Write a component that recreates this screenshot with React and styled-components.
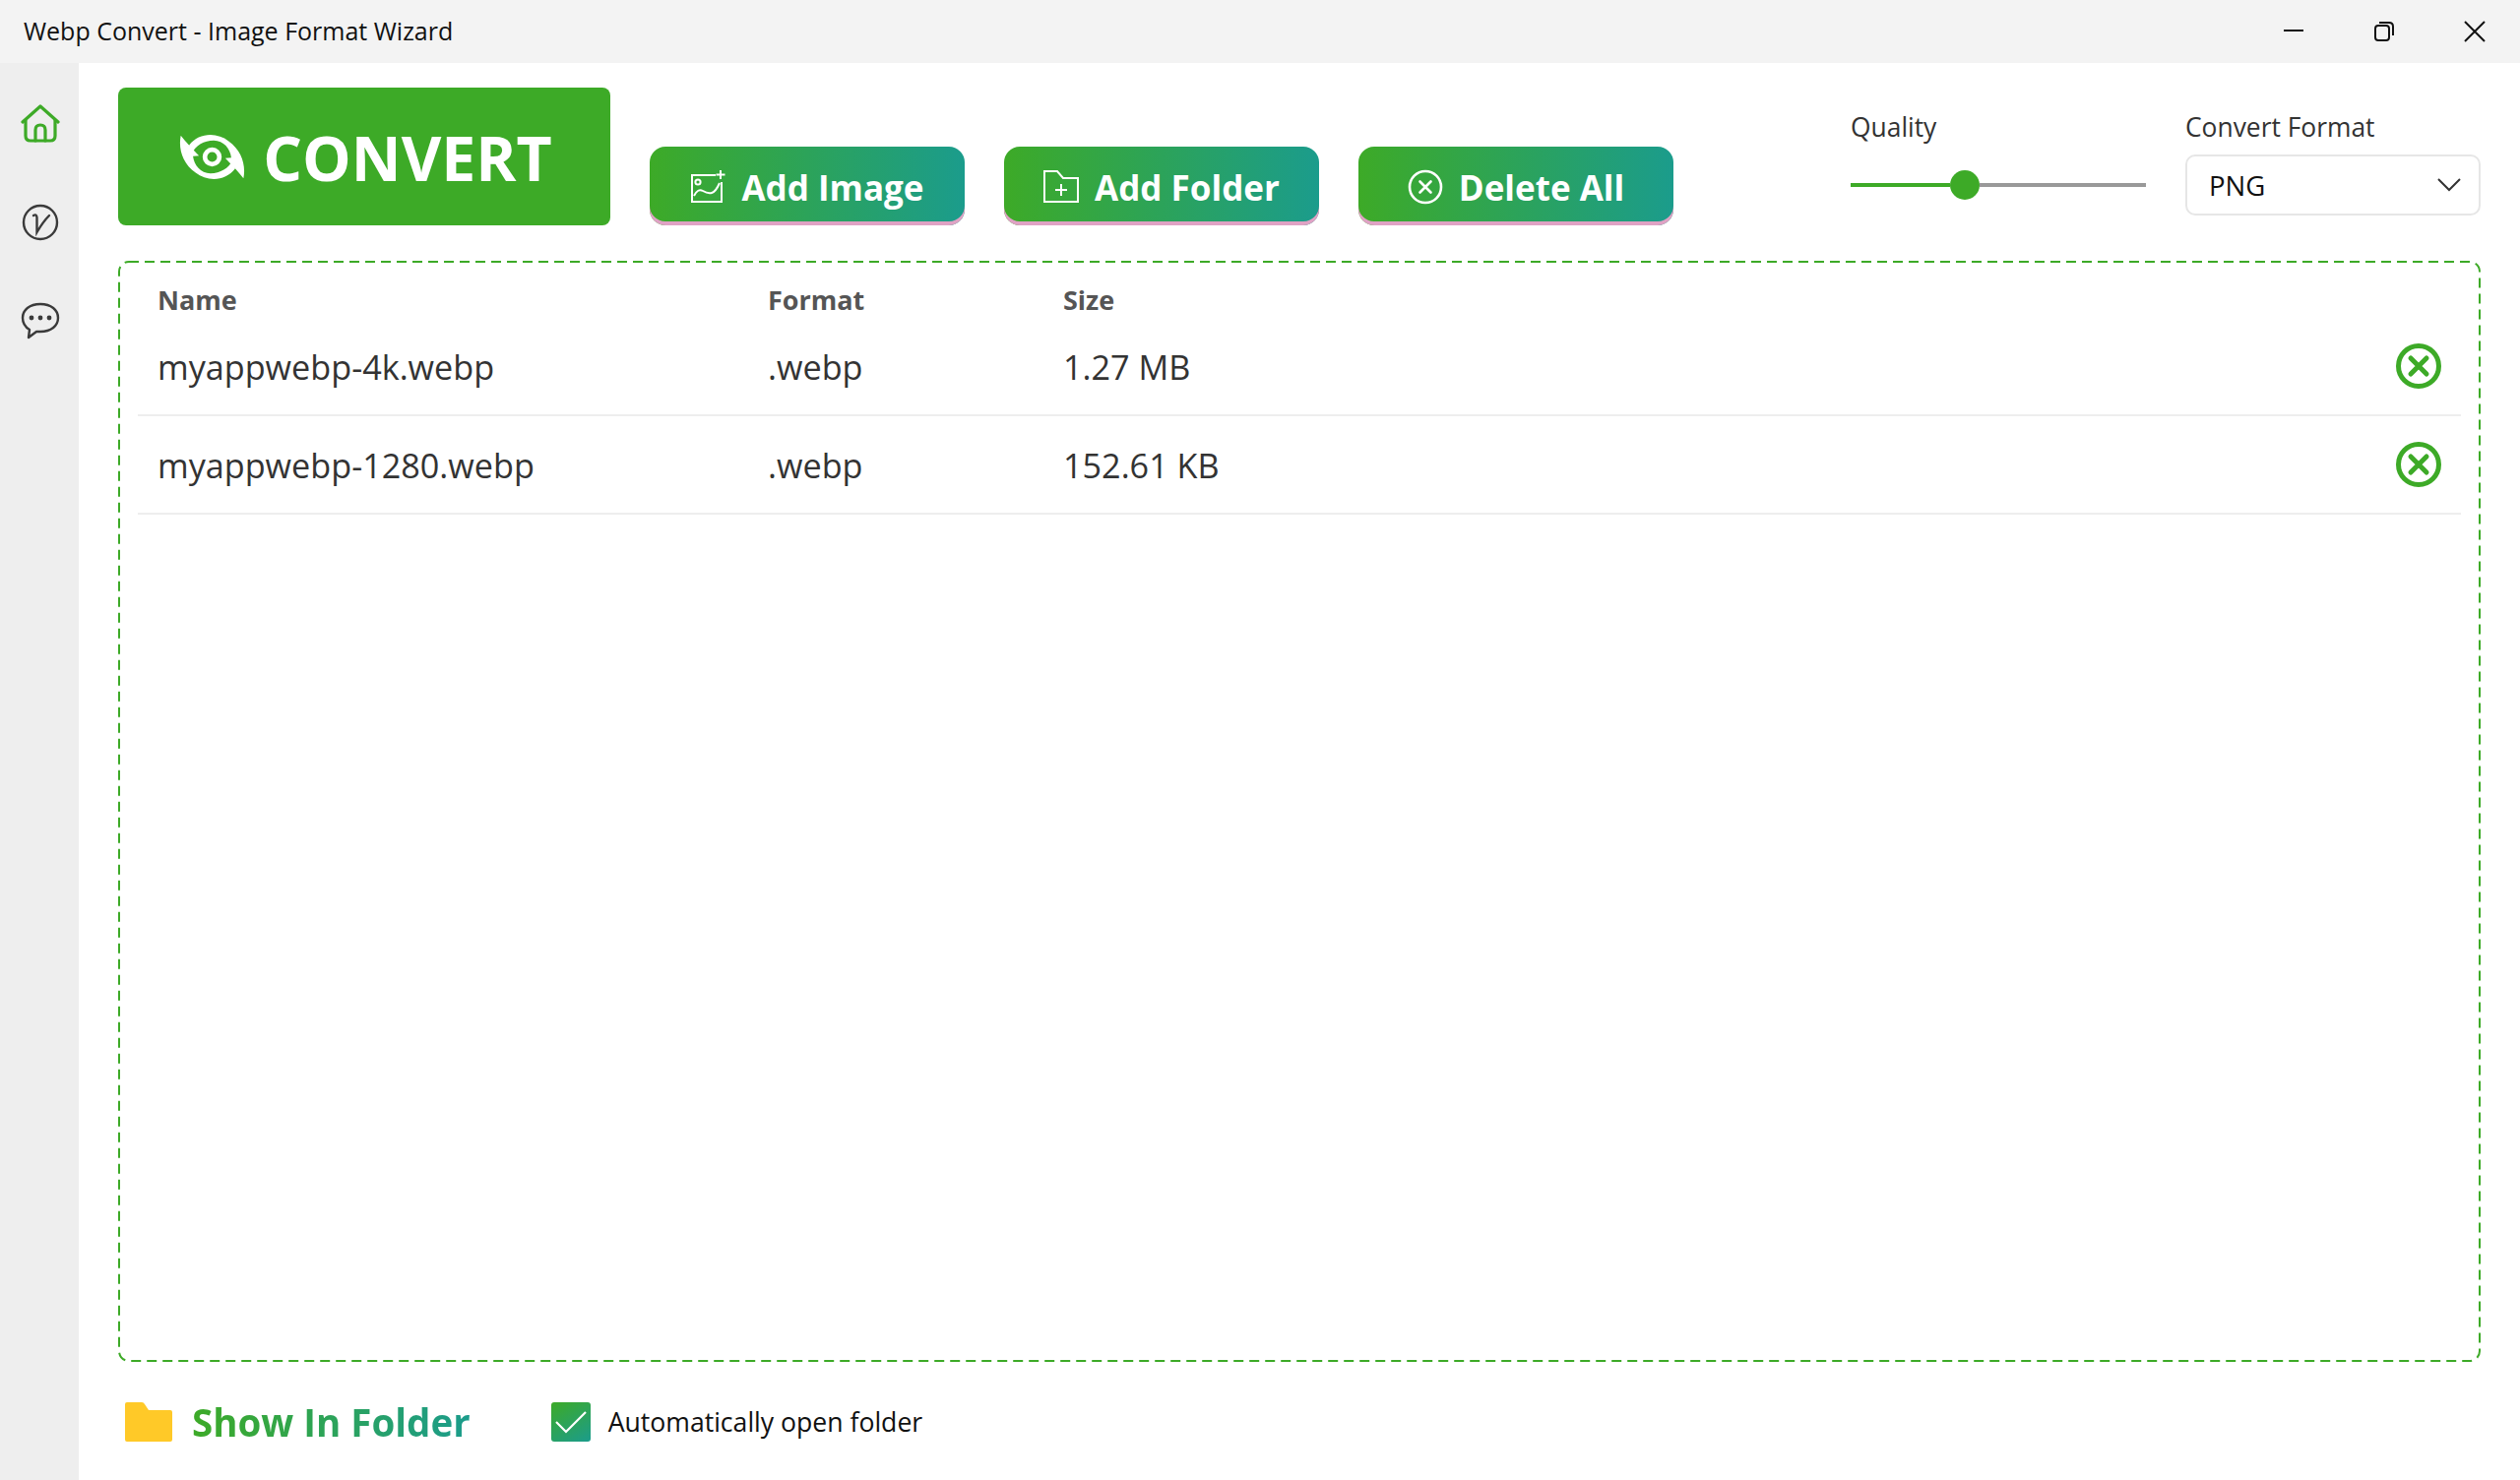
import React from 'react'
import styled, { createGlobalStyle } from 'styled-components'

const GREEN = '#3daa27'
const TEAL = '#1b9c8c'
const FONT = `'Open Sans', 'Noto Sans', sans-serif`

const DASHED_BORDER = `url("data:image/svg+xml,%3Csvg xmlns='http://www.w3.org/2000/svg' width='100%25' height='100%25'%3E%3Crect x='1' y='1' width='calc(100%25 - 2px)' height='calc(100%25 - 2px)' rx='10' fill='none' stroke='%233daa27' stroke-width='2' stroke-dasharray='10 6'/%3E%3C/svg%3E")`

const GlobalStyle = createGlobalStyle`
  html, body { margin: 0; padding: 0; height: 100%; background: #fff; }
  * { box-sizing: border-box; }
  body { font-family: ${FONT}; color: #222; }
`

const Page = styled.div`
  width: 2560px;
  height: 1504px;
  display: flex;
  flex-direction: column;
  overflow: hidden;
`

const TitleBar = styled.header`
  height: 64px;
  flex: none;
  background: #f3f3f3;
  display: flex;
  align-items: center;
  justify-content: space-between;
  padding-left: 24px;
`

const Title = styled.div`
  font-size: 25px;
  color: #111;
  margin-top: -2px;
`

const WindowControls = styled.div`
  display: flex;
  align-items: center;
`

const WindowButton = styled.div`
  width: 92px;
  height: 64px;
  display: flex;
  align-items: center;
  justify-content: center;
`

const Body = styled.div`
  flex: 1;
  display: flex;
  min-height: 0;
`

const Sidebar = styled.nav`
  width: 80px;
  flex: none;
  background: #eeeeee;
  display: flex;
  flex-direction: column;
  align-items: center;
  padding: 37px 0 0 2px;
  gap: 50px;
`

const NavItem = styled.div`
  width: 50px;
  height: 50px;
  display: flex;
  align-items: center;
  justify-content: center;
`

const Main = styled.main`
  flex: 1;
  display: flex;
  flex-direction: column;
  padding: 25px 40px 0 40px;
`

const Toolbar = styled.div`
  height: 140px;
  flex: none;
  display: flex;
  align-items: flex-end;
`

const ConvertButton = styled.button`
  width: 500px;
  height: 140px;
  border: none;
  border-radius: 8px;
  background: ${GREEN};
  color: #fff;
  font-family: ${FONT};
  font-weight: 700;
  font-size: 62.5px;
  display: flex;
  align-items: center;
  justify-content: center;
  gap: 18px;
  padding: 0 0 0 3px;
`

const ActionRow = styled.div`
  display: flex;
  gap: 40px;
  margin-left: 40px;
`

const ActionButton = styled.button`
  width: 320px;
  height: 80px;
  border: none;
  border-radius: 16px;
  background: linear-gradient(90deg, ${GREEN}, ${TEAL});
  box-shadow: inset 0 -4px 0 #dfa2c4;
  color: #fff;
  font-family: ${FONT};
  font-weight: 700;
  font-size: 35px;
  display: flex;
  align-items: center;
  justify-content: center;
  gap: 16px;
  padding: 2px 0 0;
`

const Settings = styled.div`
  margin-left: auto;
  display: flex;
  gap: 40px;
  align-self: stretch;
  padding-top: 22px;
`

const Field = styled.div`
  width: ${(p) => p.$width}px;
  display: flex;
  flex-direction: column;
`

const FieldLabel = styled.div`
  font-size: 26.4px;
  line-height: 36px;
  color: #333;
  margin-bottom: 10px;
`

const Slider = styled.div`
  height: 62px;
  display: flex;
  align-items: center;
`

const Track = styled.div`
  height: 4px;
  flex: ${(p) => p.$grow};
  background: ${(p) => (p.$active ? GREEN : '#999')};
`

const Thumb = styled.div`
  width: 30px;
  height: 30px;
  border-radius: 50%;
  background: ${GREEN};
  flex: none;
`

const Select = styled.div`
  height: 62px;
  border: 2px solid #e6e6e6;
  border-radius: 10px;
  display: flex;
  align-items: center;
  justify-content: space-between;
  padding: 0 17px 0 22px;
  font-size: 27.5px;
  color: #111;
`

const DropZone = styled.section`
  margin-top: 36px;
  height: 1119px;
  flex: none;
  background-image: ${DASHED_BORDER};
  padding: 2px 20px;
`

const HeaderRow = styled.div`
  display: grid;
  grid-template-columns: 620px 300px 1fr;
  height: 56px;
  align-items: end;
  padding: 0 20px;
  font-size: 27px;
  font-weight: 700;
  color: #555;
`

const Row = styled.div`
  display: grid;
  grid-template-columns: 620px 300px 1fr 46px;
  height: 100px;
  align-items: center;
  padding: 0 20px;
  font-size: 34.2px;
  color: #333;
  border-bottom: 2px solid #eeeeee;
`

const Footer = styled.footer`
  flex: 1;
  display: flex;
  align-items: center;
  padding: 2px 0 0 7px;
`

const ShowInFolder = styled.div`
  display: flex;
  align-items: center;
  gap: 20px;
`

const GradientText = styled.span`
  font-size: 38.5px;
  font-weight: 700;
  background: linear-gradient(90deg, ${GREEN}, ${TEAL});
  -webkit-background-clip: text;
  background-clip: text;
  color: transparent;
`

const AutoOpen = styled.label`
  display: flex;
  align-items: center;
  gap: 18px;
  margin-left: 82px;
  font-size: 26.6px;
  color: #111;
`

const CheckBox = styled.span`
  width: 40px;
  height: 40px;
  border-radius: 3px;
  background: linear-gradient(150deg, ${GREEN}, ${TEAL});
  display: flex;
  align-items: center;
  justify-content: center;
`

const HomeIcon = () => (
  <svg width="40" height="40" viewBox="0 0 40 40" fill="none" stroke={GREEN} strokeWidth="3.2" strokeLinejoin="round" strokeLinecap="round">
    <path d="M2 18 L20 2 L38 18" />
    <path d="M5 16 V32 Q5 37 10 37 H30 Q35 37 35 32 V16" />
    <path d="M15 37 V26 Q15 21 20 21 Q25 21 25 26 V37" />
  </svg>
)

const VersionIcon = () => (
  <svg width="38" height="38" viewBox="0 0 38 38" fill="none" stroke="#3a3a3a" strokeWidth="2.4" strokeLinecap="round">
    <circle cx="19" cy="19" r="17" />
    <path d="M12 12 Q15 10 15.5 14 L15.5 29 Q22 18 28 12" />
  </svg>
)

const ChatIcon = () => (
  <svg width="40" height="38" viewBox="0 0 40 38" fill="none" stroke="#3a3a3a" strokeWidth="2.4" strokeLinejoin="round">
    <path d="M20 2 C9 2 2 8 2 16 C2 21 4 25 9 28 L8 36 L16 30 C17 30 19 30 20 30 C31 30 38 24 38 16 C38 8 31 2 20 2 Z" />
    <g fill="#3a3a3a" stroke="none">
      <circle cx="11" cy="16" r="2.4" />
      <circle cx="20" cy="16" r="2.4" />
      <circle cx="29" cy="16" r="2.4" />
    </g>
  </svg>
)

const MinimizeIcon = () => (
  <svg width="22" height="22" viewBox="0 0 22 22" stroke="#111" strokeWidth="2" fill="none">
    <path d="M1 10 H21" />
  </svg>
)

const RestoreIcon = () => (
  <svg width="22" height="22" viewBox="0 0 22 22" stroke="#111" strokeWidth="2" fill="none">
    <rect x="2" y="5" width="14" height="15" rx="3" />
    <path d="M6 2 H16 Q20 2 20 6 V15" />
  </svg>
)

const CloseIcon = () => (
  <svg width="22" height="22" viewBox="0 0 22 22" stroke="#111" strokeWidth="2" fill="none">
    <path d="M1 1 L21 21 M21 1 L1 21" />
  </svg>
)

const SWIRL = 'M195 135 C203 95 190 50 150 22 C115 -5 60 -5 30 35 L38 60 C50 35 75 20 105 20 C135 20 155 45 158 72 L140 74 C160 95 180 115 195 135 Z'

const SwirlEye = () => (
  <svg width="67" height="47" viewBox="0 0 200 140" fill="#fff">
    <circle cx="100" cy="70" r="22" fill="none" stroke="#fff" strokeWidth="14" />
    <path d={SWIRL} />
    <path transform="rotate(180 100 70)" d={SWIRL} />
  </svg>
)

const AddImageIcon = () => (
  <svg width="36" height="34" viewBox="0 0 36 34" fill="none" stroke="#fff" strokeWidth="2">
    <path d="M26 5 H2 V32 H32 V12" />
    <circle cx="8" cy="12" r="2.6" />
    <path d="M4 26 Q8 18 13 21 T22 23 T30 13" />
    <path d="M31 0 V9 M26.5 4.5 H35.5" />
  </svg>
)

const AddFolderIcon = () => (
  <svg width="36" height="34" viewBox="0 0 36 34" fill="none" stroke="#fff" strokeWidth="2">
    <path d="M1 1 H14 L20 8 H35 V32 H1 Z" />
    <path d="M18 14 V26 M12 20 H24" />
  </svg>
)

const DeleteAllIcon = () => (
  <svg width="36" height="36" viewBox="0 0 36 36" fill="none" stroke="#fff" strokeWidth="2.6" strokeLinecap="round">
    <circle cx="18" cy="18" r="16" />
    <path d="M12.5 12.5 L23.5 23.5 M23.5 12.5 L12.5 23.5" />
  </svg>
)

const ChevronIcon = () => (
  <svg width="26" height="16" viewBox="0 0 26 16" fill="none" stroke="#333" strokeWidth="2">
    <path d="M2 2 L13 13 L24 2" />
  </svg>
)

const RemoveIcon = () => (
  <svg width="46" height="46" viewBox="0 0 46 46" fill="none" stroke={GREEN} strokeWidth="5" strokeLinecap="round">
    <circle cx="23" cy="23" r="20.5" />
    <path d="M15 15 L31 31 M31 15 L15 31" />
  </svg>
)

const FolderIcon = () => (
  <svg width="48" height="40" viewBox="0 0 48 40">
    <path d="M2 0 H17 Q19 0 20 2 L24 8 H46 Q48 8 48 10 V38 Q48 40 46 40 H2 Q0 40 0 38 V2 Q0 0 2 0 Z" fill="#ffc928" />
  </svg>
)

const CheckIcon = () => (
  <svg width="34" height="24" viewBox="0 0 34 24" fill="none" stroke="#fff" strokeWidth="2.2">
    <path d="M2 12 L12 22 L32 2" />
  </svg>
)

const files = [
  { name: 'myappwebp-4k.webp', format: '.webp', size: '1.27 MB' },
  { name: 'myappwebp-1280.webp', format: '.webp', size: '152.61 KB' },
]

export default function App() {
  return (
    <Page>
      <GlobalStyle />
      <TitleBar>
        <Title>Webp Convert - Image Format Wizard</Title>
        <WindowControls>
          <WindowButton><MinimizeIcon /></WindowButton>
          <WindowButton><RestoreIcon /></WindowButton>
          <WindowButton><CloseIcon /></WindowButton>
        </WindowControls>
      </TitleBar>
      <Body>
        <Sidebar>
          <NavItem><HomeIcon /></NavItem>
          <NavItem><VersionIcon /></NavItem>
          <NavItem><ChatIcon /></NavItem>
        </Sidebar>
        <Main>
          <Toolbar>
            <ConvertButton><SwirlEye />CONVERT</ConvertButton>
            <ActionRow>
              <ActionButton><AddImageIcon />Add Image</ActionButton>
              <ActionButton><AddFolderIcon />Add Folder</ActionButton>
              <ActionButton><DeleteAllIcon />Delete All</ActionButton>
            </ActionRow>
            <Settings>
              <Field $width={300}>
                <FieldLabel>Quality</FieldLabel>
                <Slider>
                  <Track $active $grow={101} />
                  <Thumb />
                  <Track $grow={169} />
                </Slider>
              </Field>
              <Field $width={300}>
                <FieldLabel>Convert Format</FieldLabel>
                <Select>PNG<ChevronIcon /></Select>
              </Field>
            </Settings>
          </Toolbar>
          <DropZone>
            <HeaderRow>
              <span>Name</span>
              <span>Format</span>
              <span>Size</span>
            </HeaderRow>
            {files.map((file) => (
              <Row key={file.name}>
                <span>{file.name}</span>
                <span>{file.format}</span>
                <span>{file.size}</span>
                <RemoveIcon />
              </Row>
            ))}
          </DropZone>
          <Footer>
            <ShowInFolder>
              <FolderIcon />
              <GradientText>Show In Folder</GradientText>
            </ShowInFolder>
            <AutoOpen>
              <CheckBox><CheckIcon /></CheckBox>
              Automatically open folder
            </AutoOpen>
          </Footer>
        </Main>
      </Body>
    </Page>
  )
}
